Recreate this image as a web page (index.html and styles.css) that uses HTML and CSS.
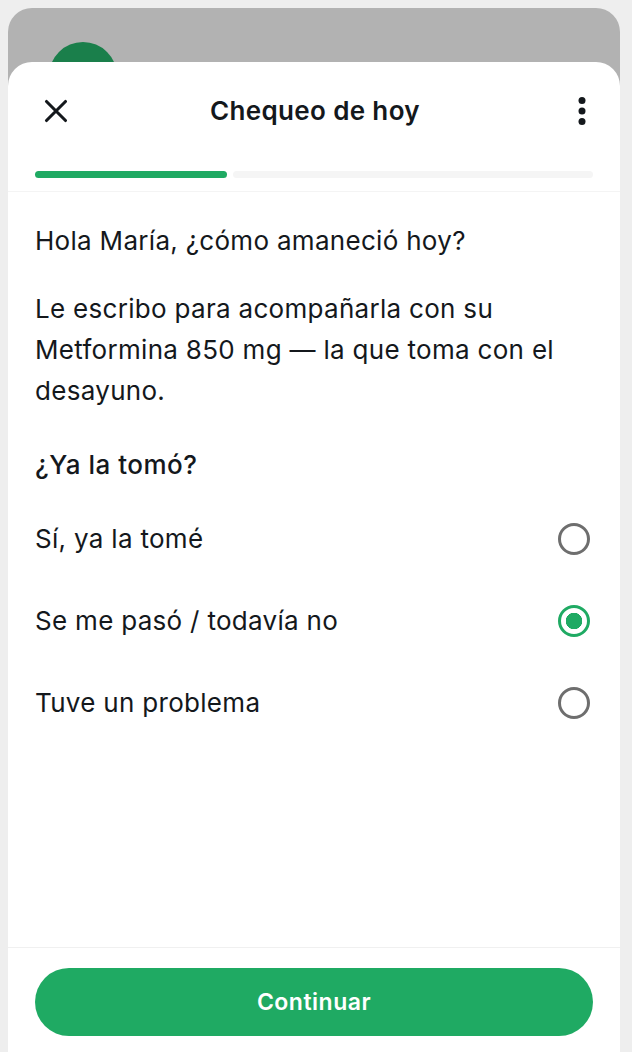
FILE: index.html
```html
<!DOCTYPE html>
<html lang="es">
<head>
<meta charset="utf-8">
<title>Chequeo de hoy</title>
<link rel="stylesheet" href="styles.css">
</head>
<body>
<div class="app">
  <div class="backdrop"><div class="avatar"></div></div>
  <section class="sheet">
    <header class="topbar">
      <button class="icon-btn" aria-label="Cerrar">
        <svg width="26" height="26" viewBox="0 0 26 26"><path d="M3.5 3.5 L22.5 22.5 M22.5 3.5 L3.5 22.5" fill="none" stroke="#14181c" stroke-width="3.1" stroke-linecap="round"/></svg>
      </button>
      <h1 class="title">Chequeo de hoy</h1>
      <button class="icon-btn" aria-label="Más">
        <svg width="26" height="30" viewBox="0 0 26 30"><circle cx="13" cy="4.5" r="3.5" fill="#14181c"/><circle cx="13" cy="15" r="3.5" fill="#14181c"/><circle cx="13" cy="25.5" r="3.5" fill="#14181c"/></svg>
      </button>
    </header>
    <div class="progress">
      <div class="progress-done"></div>
      <div class="progress-rest"></div>
    </div>
    <main class="content">
      <p class="greeting">Hola María, ¿cómo amaneció hoy?</p>
      <p class="message">Le escribo para acompañarla con su Metformina 850 mg — la que toma con el desayuno.</p>
      <p class="question">¿Ya la tomó?</p>
      <ul class="options">
        <li class="option"><span>Sí, ya la tomé</span><span class="radio"></span></li>
        <li class="option"><span>Se me pasó / todavía no</span><span class="radio radio-on"></span></li>
        <li class="option"><span>Tuve un problema</span><span class="radio"></span></li>
      </ul>
    </main>
    <footer class="footer">
      <button class="cta">Continuar</button>
    </footer>
  </section>
</div>
</body>
</html>
```
FILE: styles.css
```css
* { box-sizing: border-box; }
html, body { margin: 0; height: 100%; }
body {
  background: #eeeeee;
  padding: 8px 12px 0 8px;
  font-family: Inter, "Liberation Sans", sans-serif;
  color: #14181c;
  overflow: hidden;
}
.app {
  position: relative;
  height: 1044px;
  border-radius: 24px 24px 0 0;
  background: #b2b2b2;
  overflow: hidden;
}
.backdrop { height: 54px; padding: 34px 0 0 41px; overflow: hidden; }
.avatar { width: 68px; height: 68px; border-radius: 50%; background: #1a7f4b; }
.sheet {
  position: absolute;
  inset: 54px 0 0 0;
  display: flex;
  flex-direction: column;
  background: #fff;
  border-radius: 24px 24px 0 0;
}
.topbar {
  height: 97px;
  padding: 0 25px 0 35px;
  display: flex;
  align-items: center;
  justify-content: space-between;
}
.icon-btn {
  border: 0;
  padding: 0;
  background: none;
  display: flex;
  width: 26px;
  justify-content: center;
}
.title {
  margin: 0 0 0 -8px;
  font-size: 26px;
  line-height: 32px;
  font-weight: 600;
  letter-spacing: 0.35px;
}
.progress {
  height: 33px;
  padding: 12px 27px 0;
  display: flex;
  gap: 6px;
  border-bottom: 1px solid #f4f4f4;
}
.progress-done { width: 192px; height: 7px; border-radius: 4px; background: #1faa63; }
.progress-rest { flex: 1; height: 7px; border-radius: 4px; background: #f5f5f5; }
.content {
  flex: 1;
  padding: 28px 27px 0;
  font-size: 26px;
  line-height: 41px;
  letter-spacing: 0.3px;
}
.content p { margin: 0; }
.content .message { margin-top: 27px; }
.content .question { margin-top: 33px; font-weight: 500; letter-spacing: 0.5px; }
.options { list-style: none; margin: 12px 0 0; padding: 0; }
.option {
  height: 82px;
  display: flex;
  align-items: center;
  justify-content: space-between;
}
.radio {
  width: 32px;
  height: 32px;
  margin: 2px 3px 0 0;
  border-radius: 50%;
  border: 3.5px solid #6e6e6e;
}
.radio-on {
  border-color: #1faa63;
  background: radial-gradient(circle, #1faa63 0 8px, #fff 8.5px);
}
.footer { height: 105px; padding: 20px 27px 0; border-top: 1px solid #f0f0f0; }
.cta {
  width: 100%;
  height: 68px;
  border: 0;
  border-radius: 34px;
  background: #1faa63;
  color: #fff;
  font: 600 23px Inter, "Liberation Sans", sans-serif;
  letter-spacing: 0.5px;
}
```
